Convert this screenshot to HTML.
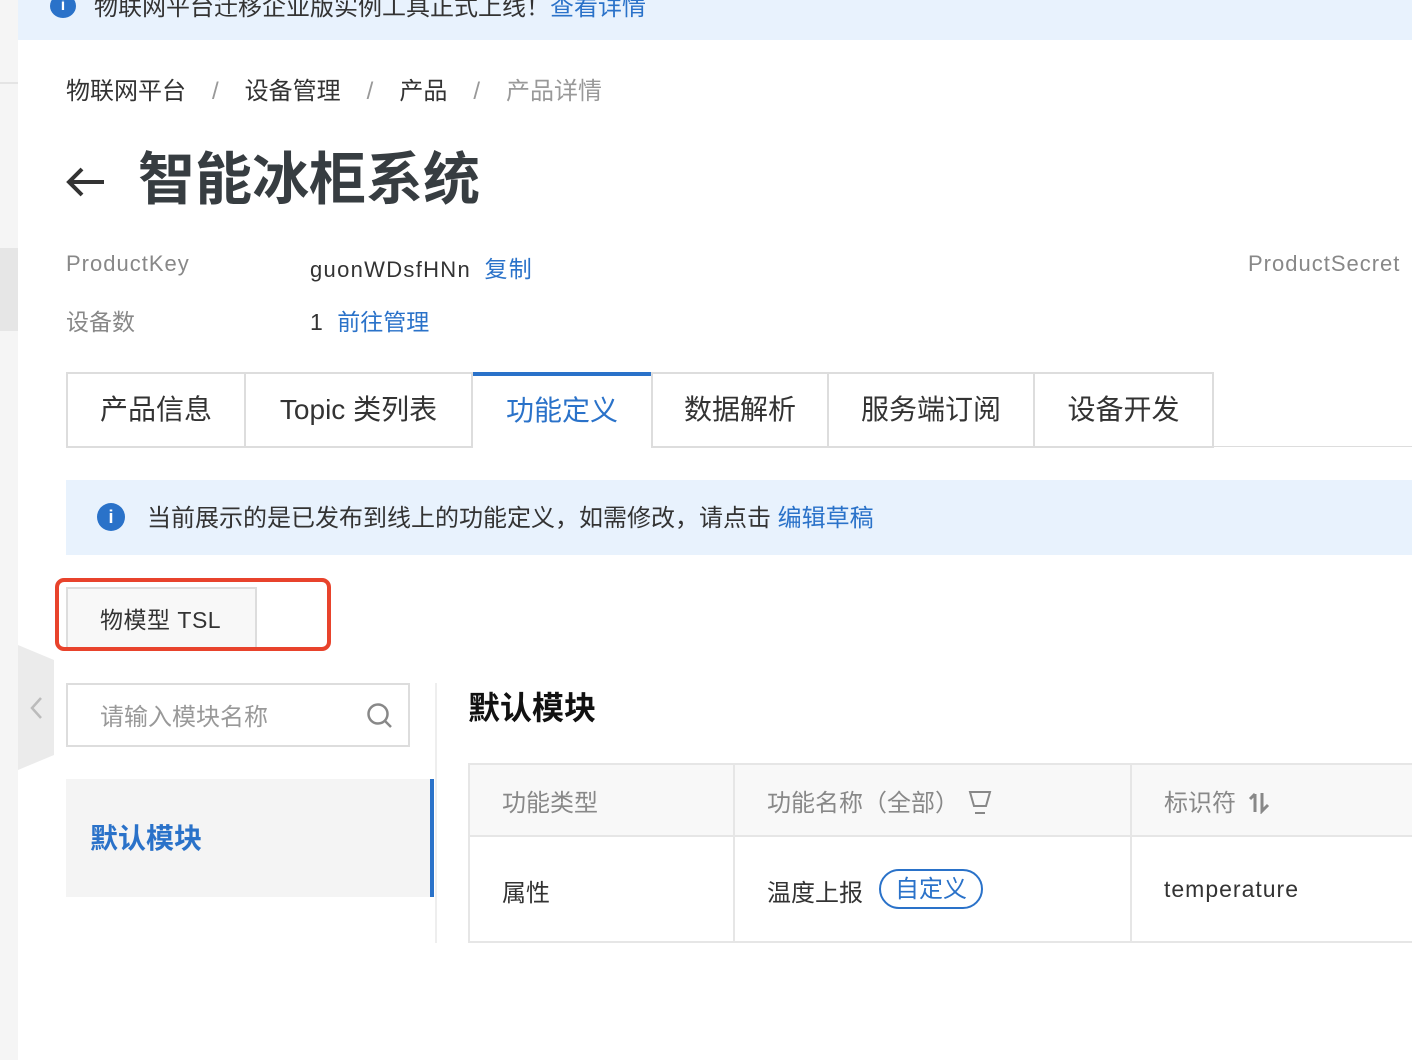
<!DOCTYPE html>
<html><head><meta charset="utf-8"><style>
*{margin:0;padding:0;box-sizing:border-box}
body{width:1412px;height:1060px;overflow:hidden;background:#fff;font-family:"Liberation Sans","Noto Sans CJK SC",sans-serif;color:#333;position:relative}
.a{position:absolute;white-space:nowrap}
.blue{color:#2a72c9}
</style></head><body>
<div class="a" style="left:0;top:0;width:18px;height:1060px;background:#f5f5f5"></div>
<div class="a" style="left:0;top:82px;width:18px;height:2px;background:#e4e4e4"></div>
<div class="a" style="left:0;top:248px;width:18px;height:83px;background:#e6e6e6"></div>
<div class="a" style="left:18px;top:0;width:1394px;height:40px;background:#e8f2fd"></div>
<div class="a" style="left:50px;top:-6px;width:26px;height:24px;border-radius:50%;background:#2a72c9;color:#fff;font-size:16px;text-align:center;line-height:24px;font-weight:bold">i</div>
<div class="a" style="left:94px;top:-13px;font-size:24px;color:#333">物联网平台迁移企业版实例工具正式上线！<span class="blue">查看详情</span></div>

<div class="a" style="left:66px;top:71px;font-size:24px;color:#333">物联网平台<span style="color:#999;margin:0 26px">/</span>设备管理<span style="color:#999;margin:0 26px">/</span>产品<span style="color:#999;margin:0 26px">/</span><span style="color:#999">产品详情</span></div>

<svg class="a" style="left:64px;top:164px" width="44" height="36" viewBox="0 0 44 36"><path d="M40 18H6M18 5L5 18l13 13" stroke="#333" stroke-width="4" fill="none"/></svg>
<div class="a" style="left:138px;top:134px;font-size:57px;font-weight:bold;color:#373d41">智能冰柜系统</div>

<div class="a" style="left:66px;top:251px;font-size:22px;color:#888;letter-spacing:1px">ProductKey</div>
<div class="a" style="left:310px;top:250px;font-size:22px;color:#333;letter-spacing:1.3px">guonWDsfHNn <span class="blue" style="margin-left:6px;font-size:23px">复制</span></div>
<div class="a" style="left:1248px;top:251px;font-size:22px;color:#888;letter-spacing:1px">ProductSecret</div>
<div class="a" style="left:66px;top:303px;font-size:23px;color:#888">设备数</div>
<div class="a" style="left:310px;top:303px;font-size:23px;color:#333">1 <span class="blue" style="margin-left:8px">前往管理</span></div>

<div class="a" style="left:66px;top:446px;width:1346px;height:1px;background:#ddd"></div>
<div class="a" style="left:66px;top:372px;height:76px;display:flex;font-size:28px;color:#333">
 <div style="width:180px;border:2px solid #ddd;text-align:center;line-height:72px">产品信息</div>
 <div style="width:227px;border:2px solid #ddd;border-left:none;text-align:center;line-height:72px">Topic 类列表</div>
 <div style="width:178px;border-top:4px solid #2a72c9;background:#fff;text-align:center;line-height:70px;color:#2a72c9;height:76px">功能定义</div>
 <div style="width:178px;border:2px solid #ddd;text-align:center;line-height:72px">数据解析</div>
 <div style="width:206px;border:2px solid #ddd;border-left:none;text-align:center;line-height:72px">服务端订阅</div>
 <div style="width:179px;border:2px solid #ddd;border-left:none;text-align:center;line-height:72px">设备开发</div>
</div>

<div class="a" style="left:66px;top:480px;width:1346px;height:75px;background:#e8f2fd"></div>
<div class="a" style="left:97px;top:503px;width:28px;height:28px;border-radius:50%;background:#2a72c9;color:#fff;font-size:18px;font-weight:bold;text-align:center;line-height:28px">i</div>
<div class="a" style="left:147px;top:498px;font-size:24px;color:#333">当前展示的是已发布到线上的功能定义，如需修改，请点击 <span class="blue">编辑草稿</span></div>

<div class="a" style="left:66px;top:587px;width:191px;height:62px;background:#f8f8f8;border:2px solid #ddd;border-bottom:none"></div>
<div class="a" style="left:100px;top:601px;font-size:23px;color:#333;letter-spacing:0.5px">物模型 TSL</div>
<div class="a" style="left:55px;top:578px;width:276px;height:73px;border:4px solid #e8432c;border-radius:9px"></div>

<svg class="a" style="left:18px;top:645px" width="36" height="125"><path d="M0 0L36 15V110L0 125Z" fill="#ebebeb"/><path d="M23 53L14 63l9 10" stroke="#bbb" stroke-width="2.5" fill="none"/></svg>

<div class="a" style="left:66px;top:683px;width:344px;height:64px;border:2px solid #ddd"></div>
<div class="a" style="left:100px;top:697px;font-size:24px;color:#999">请输入模块名称</div>
<svg class="a" style="left:366px;top:702px" width="28" height="28"><circle cx="12" cy="12" r="9.5" stroke="#888" stroke-width="2.5" fill="none"/><path d="M19 19l6 6" stroke="#888" stroke-width="2.5"/></svg>
<div class="a" style="left:435px;top:683px;width:2px;height:260px;background:#eee"></div>
<div class="a" style="left:66px;top:779px;width:368px;height:118px;background:#f4f4f4;border-right:4px solid #2a72c9"></div>
<div class="a" style="left:90px;top:817px;font-size:28px;color:#2a72c9;font-weight:bold">默认模块</div>

<div class="a" style="left:468px;top:683px;font-size:32px;font-weight:bold;color:#111">默认模块</div>
<div class="a" style="left:468px;top:763px;width:944px;height:180px;border:2px solid #e6e6e6;border-right:none"></div>
<div class="a" style="left:470px;top:765px;width:942px;height:72px;background:#f8f8f8;border-bottom:2px solid #e6e6e6"></div>
<div class="a" style="left:733px;top:765px;width:2px;height:176px;background:#e6e6e6"></div>
<div class="a" style="left:1130px;top:765px;width:2px;height:176px;background:#e6e6e6"></div>
<div class="a" style="left:502px;top:783px;font-size:24px;color:#888">功能类型</div>
<div class="a" style="left:767px;top:783px;font-size:24px;color:#888">功能名称（全部）</div>
<svg class="a" style="left:968px;top:790px" width="24" height="26"><path d="M2 2h20l-4 14H6Z" stroke="#888" stroke-width="2" fill="none"/><path d="M7 23h10" stroke="#888" stroke-width="2"/></svg>
<div class="a" style="left:1164px;top:783px;font-size:24px;color:#888">标识符</div>
<svg class="a" style="left:1247px;top:790px" width="24" height="24"><path d="M8 4v18M3 9l5-5" stroke="#888" stroke-width="3" fill="none"/><path d="M15 3v18l6-6" stroke="#888" stroke-width="3" fill="none"/></svg>
<div class="a" style="left:502px;top:873px;font-size:24px;color:#333">属性</div>
<div class="a" style="left:767px;top:873px;font-size:24px;color:#333">温度上报</div>
<div class="a" style="left:879px;top:869px;width:104px;height:40px;border:2px solid #2a72c9;border-radius:20px;color:#2a72c9;font-size:24px;text-align:center;line-height:38px">自定义</div>
<div class="a" style="left:1164px;top:876px;font-size:23px;color:#333;letter-spacing:1px">temperature</div>
</body></html>
